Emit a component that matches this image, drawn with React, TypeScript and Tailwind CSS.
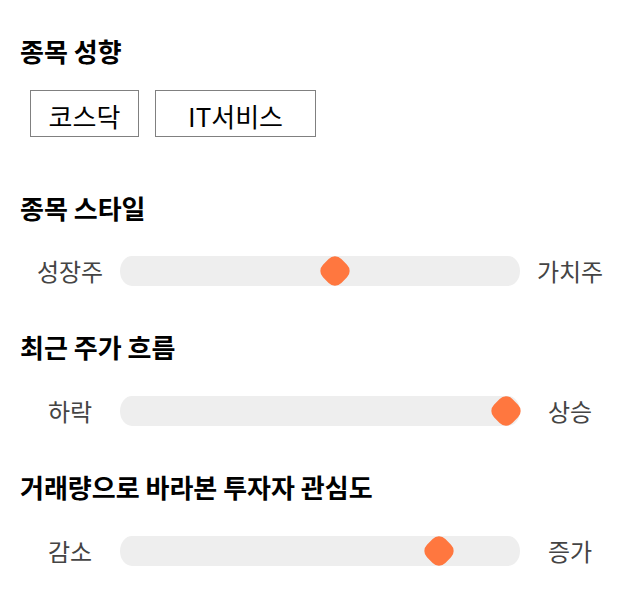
import React from "react";

const font = {
  fontFamily: '"Noto Sans CJK KR", "Noto Sans", sans-serif',
};

type SliderProps = {
  left: string;
  right: string;
  value: number;
  className?: string;
};

// thumb ~29px wide, track 400px -> thumb center runs 14..386
const Slider = ({ left, right, value, className }: SliderProps) => {
  return (
    <div className={"flex flex-row items-center h-[30px] " + (className ?? "")}>
      <div className="w-[100px] text-center text-[24px] leading-[30px] text-[#444444]">{left}</div>
      <div className="relative w-[400px] h-[30px] bg-[#eeeeee] rounded-[12px/15px]">
        <div
          className="absolute top-[2px] w-[26px] h-[26px] -ml-[13px] bg-[#ff773f] rounded-[9px] rotate-45"
          style={{ left: 14 + (value / 100) * 372 }}
        />
      </div>
      <div className="w-[100px] text-center text-[24px] leading-[30px] text-[#444444]">{right}</div>
    </div>
  );
};

const Heading = ({ children, className }: { children: React.ReactNode; className?: string }) => (
  <h2 className={"text-[26px] font-bold leading-[32px] text-black " + (className ?? "")}>{children}</h2>
);

const App = () => {
  const tags = [
    { text: "코스닥", w: "w-[109px]" },
    { text: "IT서비스", w: "w-[161px]" },
  ];

  return (
    <div className="bg-white min-h-screen w-[640px] pt-[35px] px-5" style={font}>
      <Heading>종목 성향</Heading>
      <div className="flex flex-row gap-4 pl-[10px] mt-[23px]">
        {tags.map((t) => (
          <div
            key={t.text}
            className={t.w + " h-[47px] border border-[#808080] flex items-center justify-center pt-[4px] text-[26px] text-black"}
          >
            {t.text}
          </div>
        ))}
      </div>

      <Heading className="mt-[55px]">종목 스타일</Heading>
      <Slider className="mt-[32px]" left="성장주" right="가치주" value={54} />

      <Heading className="mt-[45px]">최근 주가 흐름</Heading>
      <Slider className="mt-[33px]" left="하락" right="상승" value={100} />

      <Heading className="mt-[45px]">거래량으로 바라본 투자자 관심도</Heading>
      <Slider className="mt-[33px]" left="감소" right="증가" value={82} />
    </div>
  );
};

export default App;
